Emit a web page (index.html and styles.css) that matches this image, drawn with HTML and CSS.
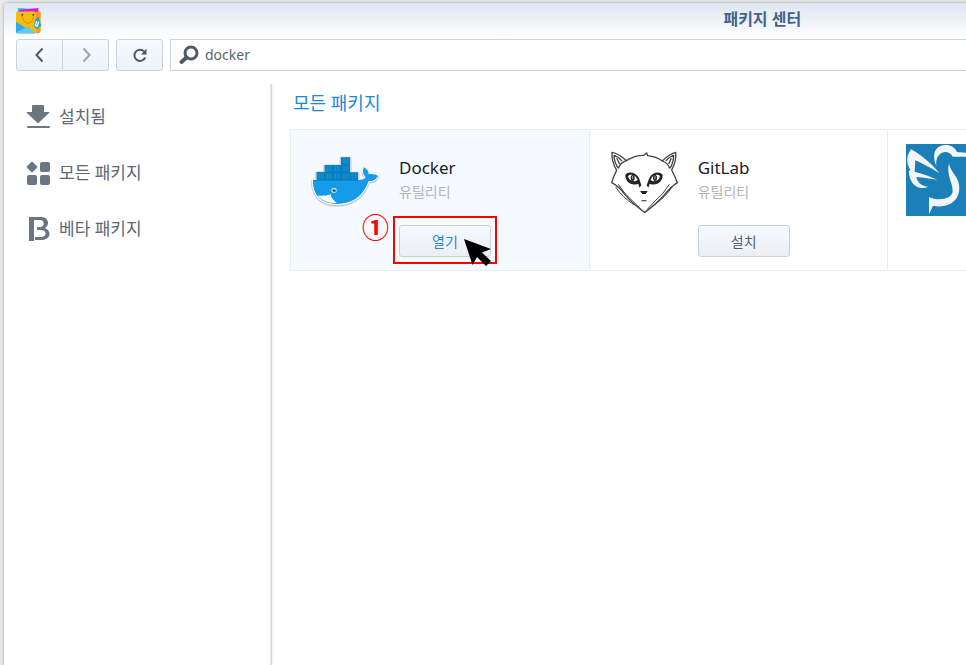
FILE: index.html
```html
<!DOCTYPE html>
<html lang="ko">
<head>
<meta charset="utf-8">
<title>패키지 센터</title>
<link rel="stylesheet" href="styles.css">
</head>
<body>
<div class="window">
  <header class="titlebar">
    <svg class="app-icon" viewBox="48 22 84 84" aria-hidden="true">
      <path fill="#22c5f5" d="M57 25l56 4v18H55z"/>
      <path fill="#e114dc" d="M62 30l56-5 1 18-60 4z"/>
      <path fill="#f59a1b" d="M104 38l18-3q3 0 3 4v55q0 6-8 7H98z"/>
      <path fill="#f6bd0b" d="M51 39q0-3 4-3l48-1q6 0 7 5l3 56q0 5-5 5H55q-4 0-4-4z"/>
      <path fill="#26adf0" d="M51 66l55 35H55q-4 0-4-4z"/>
      <path fill="#5ec9fa" d="M51 98l35-17 24 18-3 2H55z"/>
      <path fill="none" stroke="#d38a13" stroke-width="3" d="M70 46c1 34 34 32 33 0"/>
      <circle cx="70" cy="45" r="3" fill="#624411"/><circle cx="103" cy="45" r="3" fill="#624411"/>
      <path fill="#19a5df" d="M109 58l9-6 9 27-14 9-9-8z"/>
      <path fill="none" stroke="#fff" stroke-width="4" d="M113 64l-4 13 6 3 4-14"/>
    </svg>
    <h1 class="window-title">패키지 센터</h1>
  </header>
  <div class="toolbar">
    <div class="nav-group">
      <button class="tool" type="button" aria-label="뒤로"><svg viewBox="0 0 16 16"><path d="M10.500 1.500L4.500 8l6 6.500"/></svg></button>
      <button class="tool forward" type="button" aria-label="앞으로"><svg viewBox="0 0 16 16"><path d="M5.500 1.500l6 6.500-6 6.500"/></svg></button>
    </div>
    <button class="tool reload" type="button" aria-label="새로 고침"><svg viewBox="0 0 16 16"><path d="M12 4.300A5.600 5.600 0 1 0 13.200 10.500"/><path class="solid" d="M14.500 1.500v6H9z"/></svg></button>
    <label class="search">
      <svg viewBox="0 0 20 20" aria-hidden="true"><circle cx="12" cy="8" r="6"/><path class="handle" d="M7.500 12.500L2.500 17"/></svg>
      <input type="text" value="docker" aria-label="검색">
    </label>
  </div>
  <div class="body">
    <nav class="sidebar">
      <a href="#installed">
        <svg viewBox="0 0 24 24" aria-hidden="true"><path d="M6 1q0-1 1-1h10q1 0 1 1v6h5q1 0 0 1L13 17.500q-1 1-2 0L1 8q-1-1 0-1h5z"/><rect x="1" y="21" width="23" height="2" rx="1"/></svg>
        설치됨
      </a>
      <a href="#all">
        <svg viewBox="0 0 24 24" aria-hidden="true"><rect x="2" y="2" width="8" height="8" rx="1" transform="rotate(45 6 6)"/><rect x="14" y="1" width="10" height="10" rx="2"/><rect x="1" y="14" width="10" height="10" rx="2"/><rect x="14" y="14" width="10" height="10" rx="2"/></svg>
        모든 패키지
      </a>
      <a href="#beta">
        <svg viewBox="0 0 24 24" aria-hidden="true"><path fill-rule="evenodd" d="M3 0h12c8 0 9 8 4 11 7 3 6 12-4 12H9v-3h6c6 0 6-7 0-7h-4v-3h3c5 0 5-7 0-7H8v22H3z"/></svg>
        베타 패키지
      </a>
    </nav>
    <main class="content">
      <h2>모든 패키지</h2>
      <div class="packages">
        <article class="card selected">
          <svg class="logo" viewBox="12 -3 216 216" aria-hidden="true">
            <g stroke="#c9cfd4" stroke-width="9" stroke-linejoin="round" transform="translate(0 3)">
              <path d="M22 105h139c10 0 18-2 21-8-9-10-11-20-5-30 10 6 14 13 14 21 10-2 20 0 28 5-6 12-16 16-28 15-15 45-49 70-95 70-49 0-73-27-74-73z"/>
              <path d="M35 105V82h24V60h49V37h27v45h24v23z"/>
            </g>
            <g stroke="#fff" stroke-width="4" stroke-linejoin="round">
              <path fill="#159bea" d="M22 105h139c10 0 18-2 21-8-9-10-11-20-5-30 10 6 14 13 14 21 10-2 20 0 28 5-6 12-16 16-28 15-15 45-49 70-95 70-49 0-73-27-74-73z"/>
            </g>
            <path fill="#159bea" d="M24 105h137c10 0 18-2 21-8-9-10-11-20-5-30 10 6 14 13 14 21 10-2 20 0 28 5-6 12-16 16-28 15-15 45-49 68-95 68-49 0-72-27-72-71z"/>
            <path fill="#0a84c8" d="M35 105V82h24V60h49V37h27v45h24v23z"/>
            <path fill="none" stroke="#0875b4" stroke-width="2" d="M59 82h76M108 60h27M59 82v23M83 60v45M108 60v45M135 82v23M35 82h24M24 106h137"/>
            <path fill="none" stroke="#2294d3" stroke-width="2" d="M43 87v13M51 87v13M67 65v13M75 65v13M91 65v13M100 65v13M117 42v13M126 42v13M67 87v13M75 87v13M91 87v13M100 87v13M117 65v13M126 65v13M117 87v13M126 87v13M143 87v13M151 87v13"/>
            <path fill="#fff" d="M38 152q24 2 40-4-3 11 18 26-39 1-58-22z"/>
            <circle cx="87" cy="136" r="8" fill="#c5e2ef"/><circle cx="88" cy="136" r="5" fill="#23566e"/><circle cx="90" cy="134" r="2" fill="#fff"/>
          </svg>
          <div class="info">
            <h3>Docker</h3>
            <p>유틸리티</p>
            <div class="action">
              <button class="btn open" type="button">열기</button>
              <span class="highlight"></span>
              <span class="step">①</span>
              <svg class="pointer" viewBox="0 0 28 30" aria-hidden="true"><path d="M0 0l27 10-9 3.500 9 8.500-5 5-9-9-4.500 8z"/></svg>
            </div>
          </div>
        </article>
        <article class="card">
          <svg class="logo" viewBox="24 12 216 216" aria-hidden="true">
            <g fill="#fff" stroke="#444" stroke-width="4" stroke-linejoin="round">
              <path d="M36 37q20 3 43 25Q106 45 132 46l8-7 3 8q26 3 44 16 19-20 40-26 3 26-12 53 9 16 17 38-20 13-39 37-28 31-59 52-33-23-57-51-22-29-42-38 5-19 15-37Q34 64 36 37z"/>
              <path fill="none" d="M42 45q12 5 24 18M42 45q0 22 13 40M55 85q6-17 24-23M50 54l9 18M221 45q-12 5-24 18M221 45q0 22-11 40M209 85q-4-15-22-22M214 54l-8 18"/>
              <path fill="none" stroke-width="3" d="M55 133q17 29 43 50l26 26M208 133q-17 29-43 50l-24 26M47 141q20 31 55 53M216 141q-20 31-53 53"/>
            </g>
            <path fill="#222" d="M76 106c4-13 30-11 41 8l7 22-6 7-3-12c-20 8-38-3-39-25zM188 106c-5-13-30-11-40 8l-8 22 5 7 4-12c20 8 38-3 39-25z"/>
            <path fill="#fff" d="M84 109c8-9 22-4 29 10-9 9-25 5-29-10zM180 109c-8-9-22-4-28 10 9 9 24 5 28-10z"/>
            <ellipse cx="98" cy="114" rx="6" ry="9" fill="#222"/><ellipse cx="165" cy="114" rx="6" ry="9" fill="#222"/>
            <path stroke="#eee" stroke-width="2" d="M98 108v10M165 108v10"/>
            <path fill="#222" d="M120 153h23l-6 9h-10zM124 181h15v3h-15z"/>
          </svg>
          <div class="info">
            <h3>GitLab</h3>
            <p>유틸리티</p>
            <div class="action"><button class="btn" type="button">설치</button></div>
          </div>
        </article>
        <article class="card">
          <svg class="logo" viewBox="78 72 216 216" aria-hidden="true">
            <path fill="#1b80b7" d="M78 72h216v216H78z"/>
            <g fill="#f3f5f6">
              <path d="M169 138c-15-35-4-62 27-63 18 0 29 8 35 21l63 5v9h-76c-8-17-30-18-41-5-7 8-10 20-8 33z"/>
              <path d="M93 88c20 10 56 36 85 71-29-17-50-28-72-38l-2 34c25 6 46 14 68 24-23-3-40-6-63-8 3 17 17 28 36 29-29 12-56-4-59-47l5-3c-13-22-12-42 2-62z"/>
              <path d="M207 130c4 28 31 40 31 74 0 39-34 63-79 53l-12 26v-52c28 14 70 6 71-17 1-26-20-49-11-84z"/>
            </g>
          </svg>
        </article>
      </div>
    </main>
  </div>
</div>
</body>
</html>
```
FILE: styles.css
```css
* { box-sizing: border-box; }

html { overflow: hidden; }

body {
  margin: 0;
  padding: 3px 0 0 4px;
  min-height: 100vh;
  display: flex;
  overflow: clip;
  background: #e9e9e9;
  color: #5c6873;
  font-family: "Noto Sans", "Noto Sans CJK KR", sans-serif;
}

h1, h2, h3, p { margin: 0; font-weight: 400; }

/* The window is wider than the viewport and continues past its right edge. */
.window {
  flex: none;
  width: 157vw;
  display: flex;
  flex-direction: column;
  background: #fff;
  border-radius: 4px 0 0 0;
  box-shadow: 0 0 3px #999;
}

.titlebar {
  display: grid;
  grid-template-columns: 40px 1fr 40px;
  align-items: start;
  height: 36px;
  padding-top: 4px;
  border-radius: 4px 0 0 0;
  background: linear-gradient(#dfe6f0, #fff);
}

.app-icon { width: 28px; height: 28px; margin-left: 11px; }

.window-title {
  color: #41658d;
  font-size: 16px;
  line-height: 24px;
  font-weight: 700;
  text-align: center;
}

.toolbar { display: flex; gap: 7px; padding-left: 12px; }

.nav-group { display: flex; }

.tool {
  width: 47px;
  height: 32px;
  padding: 0;
  display: flex;
  align-items: center;
  justify-content: center;
  border: 1px solid #c8d4e0;
  border-radius: 3px;
  background: linear-gradient(#f6f9fd, #edf3f9);
}

.nav-group .tool:first-child { border-radius: 3px 0 0 3px; }
.nav-group .forward { width: 46px; border-left: 0; border-radius: 0 3px 3px 0; }
.tool svg { width: 16px; height: 16px; fill: none; stroke: #4e5a66; stroke-width: 2; }
.forward svg { stroke: #9ba5b1; }
.tool .solid { fill: #4e5a66; stroke: none; }

.search {
  flex: 1;
  height: 32px;
  display: flex;
  align-items: center;
  gap: 6px;
  padding-left: 8px;
  border: 1px solid #c8d4e0;
}

.search svg { width: 20px; height: 20px; fill: none; stroke: #4e5a66; stroke-width: 3; }
.search .handle { stroke-width: 4; stroke-linecap: round; }

.search input {
  flex: 1;
  padding: 0;
  border: 0;
  outline: 0;
  background: none;
  color: #5c6570;
  font: 14px/24px "Noto Sans", sans-serif;
}

.body { flex: 1; display: flex; padding-top: 13px; }

.sidebar {
  width: 268px;
  padding: 5px 0 0 22px;
  border-right: 1px solid #d8dadc;
  box-shadow: 2px 0 2px -1px #eee, inset -2px 0 2px -1px #e4e4e4;
}

.sidebar a {
  display: flex;
  align-items: center;
  gap: 9px;
  height: 56px;
  color: #5c6873;
  font-size: 17px;
  line-height: 24px;
  text-decoration: none;
}

.sidebar svg { width: 24px; height: 24px; fill: #6b7680; }

.content { flex: 1; padding: 6px 34px 0 18px; }

.content h2 {
  padding-left: 3px;
  color: #1e88dc;
  font-size: 18px;
  line-height: 26px;
}

.packages {
  display: grid;
  grid-template-columns: repeat(4, 1fr);
  margin-top: 13px;
  border: 1px solid #e9eef1;
}

.card {
  display: flex;
  gap: 18px;
  height: 140px;
  padding: 14px 0 0 18px;
  border-right: 1px solid #e9eef1;
}

.selected { background: #f4faff; }
.logo { flex: none; width: 72px; height: 72px; }
.info { padding-top: 12px; }
.info h3 { color: #1c2024; font-size: 17px; line-height: 24px; }
.info p { color: #b0b5ba; font-size: 14px; line-height: 24px; }
.action { position: relative; width: 92px; margin-top: 21px; }

.btn {
  display: block;
  width: 100%;
  height: 32px;
  padding: 0;
  border: 1px solid #c8d2dc;
  border-radius: 3px;
  background: linear-gradient(#f6fafe, #ebeff4);
  color: #525f6b;
  font: 14px/20px "Noto Sans CJK KR", sans-serif;
}

.open { color: #1e88dc; }

.highlight {
  position: absolute;
  inset: -9px -6px -7px;
  border: 2px solid #f00;
}

.step {
  position: absolute;
  left: -37px;
  top: -14px;
  color: #f00;
  font: 700 27px/32px "Noto Sans CJK KR", sans-serif;
}

.pointer { position: absolute; left: 65px; top: 14px; width: 28px; height: 30px; }
```
